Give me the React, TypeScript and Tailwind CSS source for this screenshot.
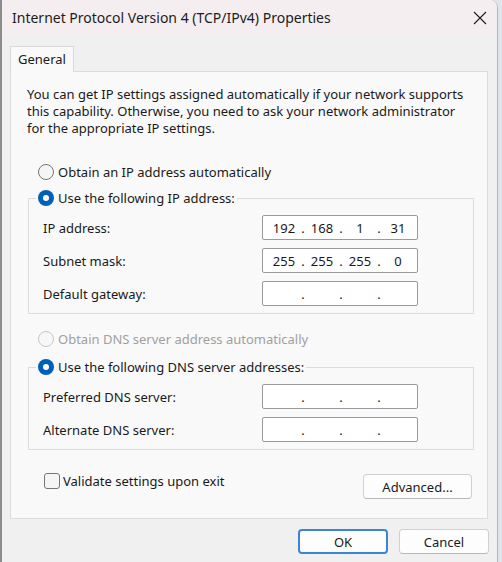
import { Fragment } from 'react'

function Radio({ checked, disabled }: { checked?: boolean; disabled?: boolean }) {
    if (checked) {
        return (
            <span className="flex h-[16px] w-[16px] shrink-0 items-center justify-center rounded-full bg-[#005fb8]">
                <span className="h-[6px] w-[6px] rounded-full bg-white" />
            </span>
        )
    }
    return (
        <span
            className={
                disabled
                    ? 'h-[16px] w-[16px] shrink-0 rounded-full border border-[#c6c6c6] bg-[#f7f7f7]'
                    : 'h-[16px] w-[16px] shrink-0 rounded-full border border-[#767676] bg-[#f5f5f5]'
            }
        />
    )
}

function IpField({ parts }: { parts?: string[] }) {
    const p = parts ?? ['', '', '', '']
    return (
        <div className="flex h-[25px] w-[156px] items-center rounded-[2px] border border-[#9a9a9a] bg-white pl-[6px] text-[#1a1a1a]">
            {p.map((v, i) => (
                <Fragment key={i}>
                    <span className="w-[30px] text-center">{v}</span>
                    {i < 3 && <span className="w-[8px] text-center">.</span>}
                </Fragment>
            ))}
        </div>
    )
}

function Row({ label, parts }: { label: string; parts?: string[] }) {
    return (
        <div className="flex h-[25px] items-center">
            <span className="w-[219px]">{label}</span>
            <IpField parts={parts} />
        </div>
    )
}

export default function App() {
    return (
        <div className="h-[562px] w-[502px] bg-[#dde5ee] font-['Noto_Sans',sans-serif] text-[13px] leading-[16px] text-[#1a1a1a]">
            <div className="flex h-[562px] w-[498px] flex-col overflow-hidden rounded-tr-[8px] border-l-2 border-r border-l-[#8c8c8c] border-r-[#b5b5b5] bg-[#f0f0f0]">
                {/* Title bar */}
                <div className="flex h-[35px] shrink-0 items-center justify-between bg-[#f5eef0] pl-[10px] pr-[10px]">
                    <span className="text-[14px] text-[#1c1c1c]">Internet Protocol Version 4 (TCP/IPv4) Properties</span>
                    <svg width="14" height="14" viewBox="0 0 14 14" className="mt-[1px]">
                        <path d="M1 1 L13 13 M13 1 L1 13" stroke="#1c1c1c" strokeWidth="1.1" />
                    </svg>
                </div>

                {/* Body */}
                <div className="flex flex-1 flex-col pl-[8px] pr-[9px]">
                    <div className="relative z-10 mt-[11px] flex h-[26px] w-[64px] items-start border border-b-0 border-[#d9d9d9] bg-[#f9f9f9] pl-[7px] pt-[4px]">
                        General
                    </div>
                    <div className="-mt-[1px] h-[448px] border border-[#dcdcdc] bg-[#f9f9f9] pl-[16px] pt-[14px]">
                        <p className="leading-[17px]">
                            You can get IP settings assigned automatically if your network supports
                            <br />
                            this capability. Otherwise, you need to ask your network administrator
                            <br />
                            for the appropriate IP settings.
                        </p>

                        <div className="ml-[11px] mt-[27px] flex h-[16px] items-center gap-[4px]">
                            <Radio />
                            <span>Obtain an IP address automatically</span>
                        </div>

                        <fieldset className="ml-[1px] mt-[10px] w-[446px] border border-[#dcdcdc] pb-[7px] pl-[14px]">
                            <legend className="-ml-[7px] px-[2px]">
                                <span className="flex h-[16px] items-center gap-[4px]">
                                    <Radio checked />
                                    <span>Use the following IP address:</span>
                                </span>
                            </legend>
                            <div className="mt-[9px] flex flex-col gap-[8px]">
                                <Row label="IP address:" parts={['192', '168', '1', '31']} />
                                <Row label="Subnet mask:" parts={['255', '255', '255', '0']} />
                                <Row label="Default gateway:" />
                            </div>
                        </fieldset>

                        <div className="ml-[11px] mt-[17px] flex h-[16px] items-center gap-[4px] text-[#a0a0a0]">
                            <Radio disabled />
                            <span>Obtain DNS server address automatically</span>
                        </div>

                        <fieldset className="ml-[1px] mt-[12px] w-[446px] border border-[#dcdcdc] pb-[7px] pl-[14px]">
                            <legend className="-ml-[7px] px-[2px]">
                                <span className="flex h-[16px] items-center gap-[4px]">
                                    <Radio checked />
                                    <span>Use the following DNS server addresses:</span>
                                </span>
                            </legend>
                            <div className="mt-[9px] flex flex-col gap-[8px]">
                                <Row label="Preferred DNS server:" />
                                <Row label="Alternate DNS server:" />
                            </div>
                        </fieldset>

                        <div className="ml-[17px] mt-[23px] flex w-[428px] items-start justify-between">
                            <label className="flex h-[16px] items-center gap-[3px]">
                                <span className="h-[16px] w-[16px] rounded-[3px] border border-[#767676] bg-[#f5f5f5]" />
                                <span>Validate settings upon exit</span>
                            </label>
                            <button className="mt-[1px] h-[25px] w-[109px] rounded-[4px] border border-[#d0d0d0] border-b-[#b8b8b8] bg-[#fdfdfd]">
                                Advanced...
                            </button>
                        </div>
                    </div>

                    <div className="-mr-[1px] mt-[10px] flex justify-end gap-[11px]">
                        <button className="h-[25px] w-[90px] rounded-[4px] border-2 border-[#3a86d4] bg-[#fdfdfd]">OK</button>
                        <button className="h-[25px] w-[90px] rounded-[4px] border border-[#d0d0d0] border-b-[#b8b8b8] bg-[#fdfdfd]">
                            Cancel
                        </button>
                    </div>
                </div>
            </div>
        </div>
    )
}
